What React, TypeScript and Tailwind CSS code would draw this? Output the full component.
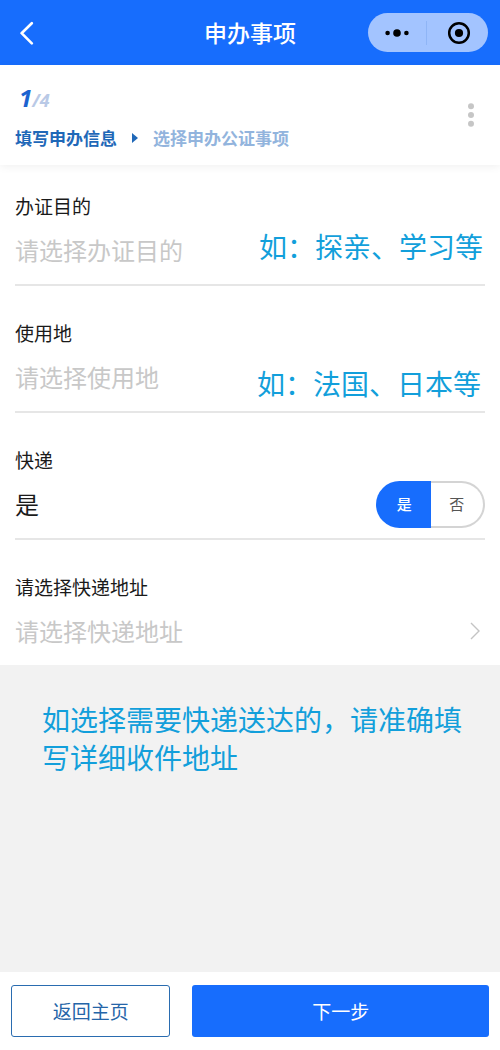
import { useState } from "react";
import type { ReactNode } from "react";

const PURPOSES = ["探亲", "学习"];
const PLACES = ["法国", "日本"];

function Header() {
  return (
    <header className="grid h-[65px] grid-cols-[1fr_auto_1fr] items-center bg-[#176dfd] px-3">
      <button type="button" aria-label="返回" className="justify-self-start px-2 py-1">
        <svg width="14" height="24" viewBox="0 0 14 24" fill="none" stroke="#fff" strokeWidth="2.6" strokeLinecap="round" strokeLinejoin="round">
          <path d="M11.8 2.2 1.6 12.2 11.8 22.4" />
        </svg>
      </button>
      <h1 className="text-[23px] font-medium text-white">申办事项</h1>
      {/* 小程序胶囊按钮 */}
      <div className="flex h-[39px] w-[120px] items-center justify-self-end rounded-full bg-[#a3c4ff]">
        <button type="button" aria-label="更多" className="flex flex-1 justify-center">
          <svg width="26" height="10" viewBox="0 0 26 10" fill="#000">
            <circle cx="3.6" cy="5" r="2.3" />
            <circle cx="13" cy="5" r="3.8" />
            <circle cx="22.4" cy="5" r="2.3" />
          </svg>
        </button>
        <span className="h-6 w-px bg-[#8fb5f6]" />
        <button type="button" aria-label="关闭" className="flex flex-1 justify-center pl-[3px]">
          <svg width="24" height="24" viewBox="0 0 24 24">
            <circle cx="12" cy="12" r="9.8" fill="none" stroke="#000" strokeWidth="2.5" />
            <circle cx="12" cy="12" r="4.1" fill="#000" />
          </svg>
        </button>
      </div>
    </header>
  );
}

function Steps() {
  return (
    <section className="flex h-[100px] items-center justify-between pl-[15px] pr-[26px] shadow-[0_2px_8px_rgba(0,0,0,0.06)]">
      <div className="pt-[3px]">
        <p className="flex items-baseline pl-1 font-['Open_Sans',sans-serif] font-bold italic leading-8">
          <span className="text-2xl text-[#1c62cf]">1</span>
          <span className="text-lg text-[#b9c9e6]">/4</span>
        </p>
        <ol className="mt-[10px] flex items-center text-[17px] font-bold leading-7">
          <li className="text-[#1f68b8]">填写申办信息</li>
          <li aria-hidden="true" className="mx-[15px]">
            <svg width="6" height="10" viewBox="0 0 6 10" fill="#1f68b8">
              <path d="M0 0 6 5 0 10Z" />
            </svg>
          </li>
          <li className="text-[#92b4dd]">选择申办公证事项</li>
        </ol>
      </div>
      <button type="button" aria-label="菜单">
        <svg width="6" height="24" viewBox="0 0 6 24" fill="#c6c6c6">
          <circle cx="3" cy="3.2" r="3" />
          <circle cx="3" cy="12" r="3" />
          <circle cx="3" cy="20.8" r="3" />
        </svg>
      </button>
    </section>
  );
}

function Field({ label, htmlFor, last, children }: { label: string; htmlFor: string; last?: boolean; children: ReactNode }) {
  return (
    <div className={last ? "pb-[10px]" : "mb-[33px] border-b-2 border-[#e6e6e6] pb-[10px]"}>
      <label htmlFor={htmlFor} className="block text-[19px] leading-7 text-[#1a1a1a]">
        {label}
      </label>
      <div className="mt-[6px] flex h-12 items-center">{children}</div>
    </div>
  );
}

function Picker({ id, placeholder, options }: { id: string; placeholder: string; options: string[] }) {
  const [value, setValue] = useState("");
  return (
    <select
      id={id}
      value={value}
      onChange={(e) => setValue(e.target.value)}
      className={`h-full min-w-0 flex-1 appearance-none bg-transparent text-2xl outline-none ${value ? "text-[#1a1a1a]" : "text-[#c8c8c8]"}`}
    >
      <option value="">{placeholder}</option>
      {options.map((o) => (
        <option key={o} value={o}>
          {o}
        </option>
      ))}
    </select>
  );
}

export default function App() {
  const [express, setExpress] = useState("是");

  return (
    <div className="flex min-h-screen flex-col bg-white font-['Noto_Sans_CJK_SC',sans-serif]">
      <Header />
      <Steps />

      <form className="px-[15px] pt-[27px]">
        <Field label="办证目的" htmlFor="purpose">
          <Picker id="purpose" placeholder="请选择办证目的" options={PURPOSES} />
          <span className="self-start pr-[2px] text-[28px] leading-10 text-[#129fdb]">如：探亲、学习等</span>
        </Field>

        <Field label="使用地" htmlFor="place">
          <Picker id="place" placeholder="请选择使用地" options={PLACES} />
          <span className="self-end pr-1 text-[28px] leading-9 text-[#129fdb]">如：法国、日本等</span>
        </Field>

        <Field label="快递" htmlFor="express-yes">
          <span className="flex-1 text-2xl text-[#1a1a1a]">{express}</span>
          <div className="flex h-[47px] w-[109px] self-end text-[15px] text-[#555]">
            <label className="flex flex-1 cursor-pointer items-center justify-center rounded-l-full border-2 border-r-0 border-[#d4d4d4] has-checked:border-[#176dfd] has-checked:bg-[#176dfd] has-checked:font-medium has-checked:text-white">
              <input id="express-yes" type="radio" name="express" className="sr-only" checked={express === "是"} onChange={() => setExpress("是")} />
              是
            </label>
            <label className="flex flex-1 cursor-pointer items-center justify-center rounded-r-full border-2 border-l-0 border-[#d4d4d4] has-checked:border-[#176dfd] has-checked:bg-[#176dfd] has-checked:font-medium has-checked:text-white">
              <input type="radio" name="express" className="sr-only" checked={express === "否"} onChange={() => setExpress("否")} />
              否
            </label>
          </div>
        </Field>

        <Field label="请选择快递地址" htmlFor="address" last>
          <button id="address" type="button" className="flex flex-1 items-center justify-between pr-[5px] text-2xl text-[#c8c8c8]">
            请选择快递地址
            <svg width="10" height="18" viewBox="0 0 10 18" fill="none" stroke="#c4c4c4" strokeWidth="1.4">
              <path d="M1 1 9 9 1 17" />
            </svg>
          </button>
        </Field>
      </form>

      <main className="flex-1 bg-[#f2f2f2] pb-8 pl-[42px] pr-8 pt-[35px]">
        <p className="text-[28px] leading-[38px] text-[#129fdb]">如选择需要快递送达的，请准确填写详细收件地址</p>
      </main>

      <footer className="flex gap-[22px] px-[11px] py-[13px] text-[19px]">
        <button type="button" className="h-[52px] w-1/3 rounded-[3px] border border-[#2a6cb0] text-[#2565a8]">
          返回主页
        </button>
        <button type="button" className="h-[52px] flex-1 rounded-[3px] bg-[#176dfd] text-white">
          下一步
        </button>
      </footer>
    </div>
  );
}
